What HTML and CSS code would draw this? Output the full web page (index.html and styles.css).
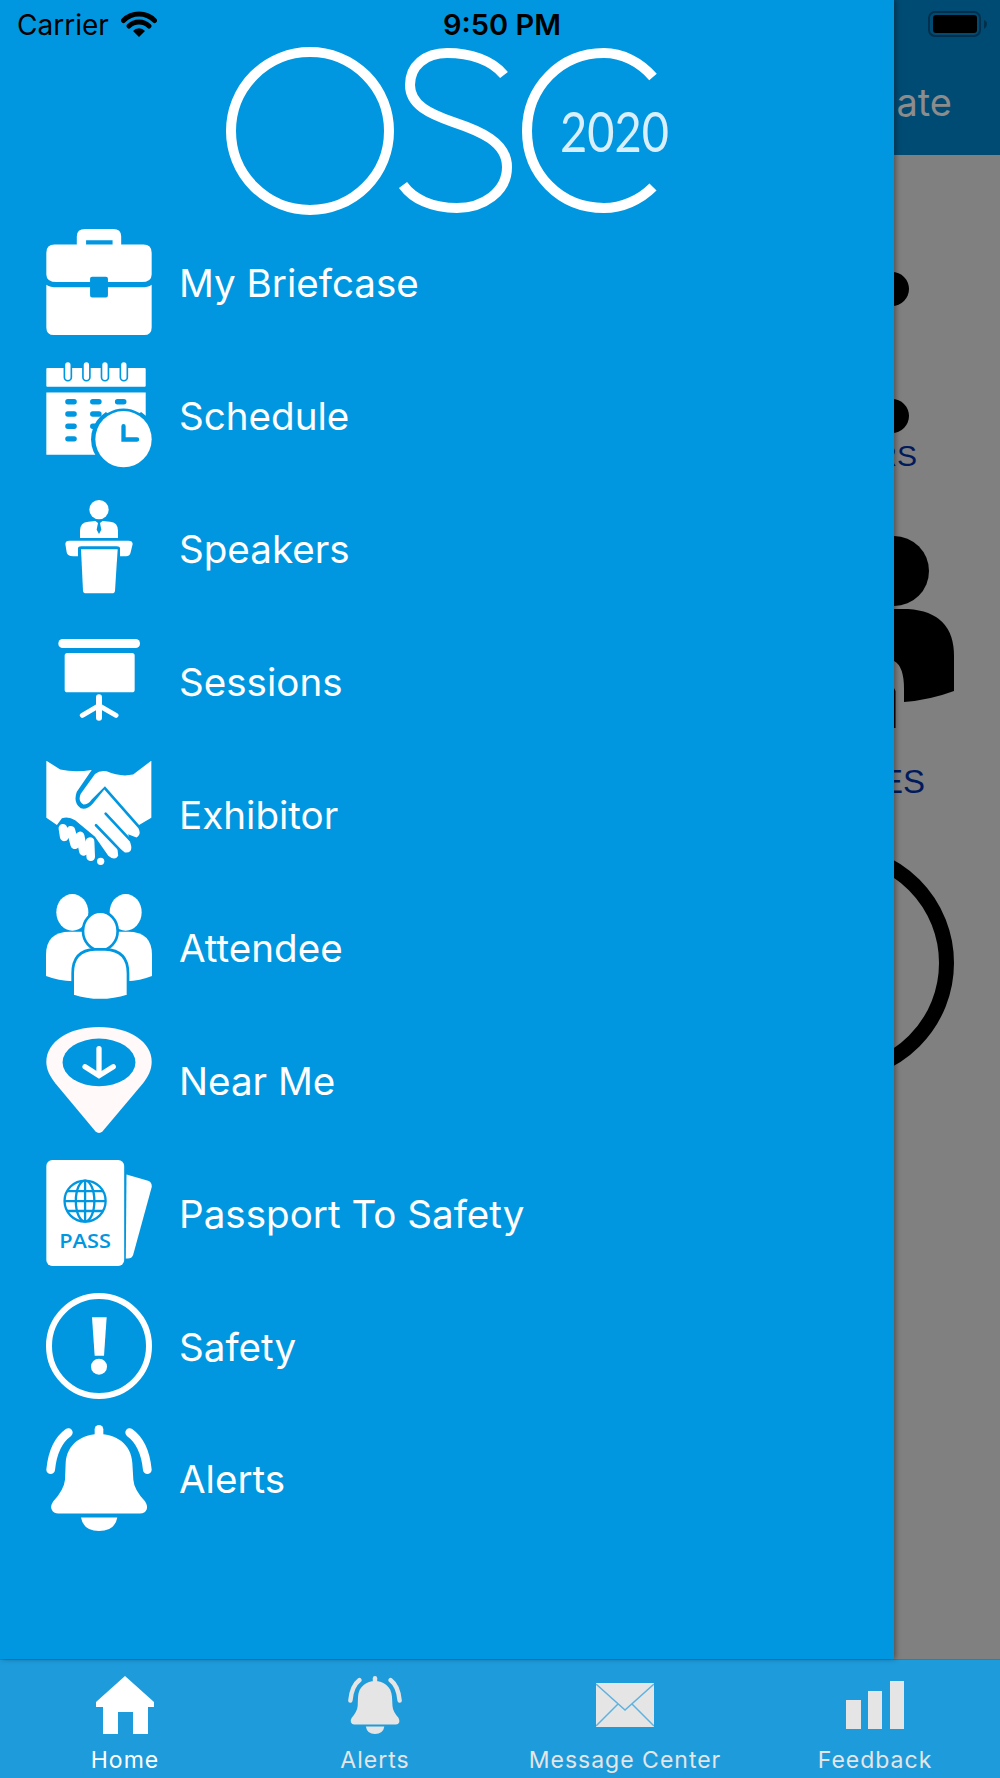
FILE: index.html
```html
<!DOCTYPE html>
<html>
	<head>
		<meta charset="utf-8">
		<title>OSC 2020</title>
		<link rel="stylesheet" href="styles.css">
	</head>
	<body>
		<svg class="defs" width="0" height="0">
			<symbol id="bell" viewBox="78 435 318 320" preserveAspectRatio="none">
				<path d="M237 462C190 462 140 490 137 550L135 600Q132 630 100 665Q90 680 95 690Q100 702 115 702H360Q375 702 380 690Q384 680 375 665Q342 630 340 600L337 550C334 490 285 462 237 462Z"/>
				<rect x="224" y="435" width="26" height="40" rx="13"/>
				<path d="M183 714H292Q285 755 237 755Q190 755 183 714Z"/>
				<path class="line" stroke-width="26" d="M145 458Q100 490 92 570M329 458Q374 490 382 570"/>
			</symbol>
		</svg>
		<div class="screen">
			<div class="status">
				<div class="carrier">Carrier
					<svg class="wifi" viewBox="0 0 36 26">
						<path class="line" stroke-width="5" d="M2.500 9.500A22 22 0 0 1 33.500 9.500M8 15A14.500 14.500 0 0 1 28 15"/>
						<path d="M12 20A8 8 0 0 1 24 20L18 26Z"/>
					</svg>
				</div>
				<div class="time">9:50 PM</div>
				<svg class="battery" viewBox="0 0 59 26">
					<rect class="battery_edge" x="1" y="1" width="51" height="24" rx="6"/>
					<rect x="5" y="4" width="44" height="18" rx="3"/>
					<path class="battery_tip" d="M56 9Q59 10 59 13Q59 16 56 18Z"/>
				</svg>
			</div>
			<div class="stage">
				<div class="backdrop">
					<div class="topbar">Update</div>
					<div class="page">
						<div class="dot dot_first"></div>
						<div class="dot dot_second"></div>
						<div class="page_label label_small">SPEAKERS</div>
						<svg class="person" viewBox="0 0 196 192">
							<circle cx="136" cy="35" r="35"/>
							<path d="M100 73H150Q196 76 196 120V155Q172 164 146 166V153Q146 130 136 125H100Z"/>
							<path d="M100 135Q130 135 137.500 155V192H100Z"/>
						</svg>
						<div class="page_label label_large">ATTENDEES</div>
						<svg class="ring" viewBox="0 0 236 236"><circle cx="118" cy="118" r="110.500"/></svg>
					</div>
				</div>
				<div class="drawer">
					<svg class="logo" viewBox="220 40 480 176" role="img" aria-label="OSC 2020">
						<circle class="line" cx="310" cy="131" r="79" stroke-width="10"/>
						<path class="line flat" stroke-width="10" d="M504 75C492 60 470 53 447 53C425 53 410 66 410 85C410 105 430 114 453 122C480 131 507 142 507 167C507 192 483 208 457 208C432 208 413 199 403 185"/>
						<path class="line flat" stroke-width="10" d="M653 77C640 62 622 53 604 53C560 53 527 88 527 131C527 174 560 208 604 208C622 208 640 200 653 187"/>
						<text class="logo_year" x="560" y="152" textLength="109" lengthAdjust="spacingAndGlyphs">2020</text>
					</svg>
					<div class="menu">
						<div class="menu_row">
							<svg class="menu_icon" viewBox="78 28 318 320">
								<path d="M170 80V50Q170 28 195 28H280Q304 28 304 50V80H278V62H198V80Z"/>
								<path d="M78 100Q78 75 103 75H371Q396 75 396 100V165Q396 188 365 188H264V178Q264 172 258 172H216Q210 172 210 178V188H110Q78 188 78 165Z"/>
								<path d="M78 196Q90 204 110 204H210V228Q210 235 216 235H258Q264 235 264 228V204H365Q385 204 396 196V325Q396 348 373 348H101Q78 348 78 325Z"/>
							</svg>
							<span>My Briefcase</span>
						</div>
						<div class="menu_row">
							<svg class="menu_icon" viewBox="78 428 318 320">
								<rect x="78" y="446" width="300" height="57" rx="3"/>
								<rect x="78" y="520" width="300" height="188"/>
								<path class="line cut_line" stroke-width="26" d="M143 438V474M199 438V474M255 438V474M312 438V474"/>
								<path class="line" stroke-width="16" d="M143 437V474M199 437V474M255 437V474M312 437V474"/>
								<path class="line cut_line" stroke-width="16" d="M143 548H162M218 548H237M293 548H312M143 585H162M218 585H237M143 622H162M218 622H237M143 660H162"/>
								<circle class="cut" cx="311" cy="661" r="98"/>
								<path class="line" stroke-width="9" d="M262 577A96 96 0 0 1 360 577"/>
								<circle cx="311" cy="661" r="85"/>
								<path class="line cut_line" stroke-width="13" d="M311 622V662H352"/>
							</svg>
							<span>Schedule</span>
						</div>
						<div class="menu_row">
							<svg class="menu_icon" viewBox="78 18 318 318">
								<circle cx="237" cy="62" r="29"/>
								<path d="M180 147V125Q180 100 205 98L226 96L237 104L248 96L270 98Q294 100 294 125V147Z"/>
								<path class="cut" d="M234 102H240L244 122L237 135L230 122Z"/>
								<path d="M148 155H325Q338 155 338 165L332 190Q330 202 318 202H300V178Q300 172 290 172H184Q174 172 174 178V202H160Q142 202 140 190L136 165Q136 155 148 155Z"/>
								<path d="M183 181H293L285 305Q284 313 276 313H198Q190 313 189 305Z"/>
							</svg>
							<span>Speakers</span>
						</div>
						<div class="menu_row">
							<svg class="menu_icon" viewBox="78 417 318 318">
								<rect x="115" y="450" width="245" height="27" rx="13"/>
								<rect x="134" y="492" width="210" height="118" rx="8"/>
								<path class="line" stroke-width="18" d="M237 625V686"/>
								<path class="line" stroke-width="15" d="M187 679L237 650L288 679"/>
							</svg>
							<span>Sessions</span>
						</div>
						<div class="menu_row">
							<svg class="menu_icon" viewBox="18 19 318 320">
								<path d="M18 18L60 45Q105 55 155 46L110 112Q98 145 122 162Q140 168 158 148L193 105L296 222Q306 240 290 250L265 240L274 275Q278 298 255 295L232 278L235 305Q225 322 205 305L165 248L105 198Q85 185 65 192L50 212L18 190Z"/>
								<path d="M335 18L280 60Q240 68 200 50Q180 46 165 58L122 118Q112 140 130 150Q145 150 155 135L195 95L298 212L335 190Z"/>
								<path class="line cut_line" stroke-width="8" d="M197 178L285 272M168 213L252 300"/>
								<path class="line" stroke-width="26" d="M68 222L72 248M92 228L104 272M120 245L130 292M150 262L152 308"/>
								<circle cx="182" cy="322" r="11"/>
							</svg>
							<span>Exhibitor</span>
						</div>
						<div class="menu_row">
							<svg class="menu_icon" viewBox="78 432 318 318">
								<ellipse cx="157" cy="487" rx="48" ry="55"/>
								<ellipse cx="317" cy="487" rx="48" ry="55"/>
								<path d="M78 678V615Q78 545 150 545H324Q396 545 396 615V678Q360 692 320 694H160Q115 692 78 678Z"/>
								<ellipse class="outlined" cx="241" cy="543" rx="52" ry="58"/>
								<path class="outlined" d="M158 737V670Q158 600 225 598H255Q324 600 324 670V737Q240 764 158 737Z"/>
							</svg>
							<span>Attendee</span>
						</div>
						<div class="menu_row">
							<svg class="menu_icon" viewBox="78 20 318 320">
								<path class="pin" d="M237 20C330 20 396 65 396 125C396 150 385 170 370 190L248 335Q237 345 226 335L105 190C90 170 78 150 78 125C78 65 145 20 237 20Z"/>
								<ellipse class="cut" cx="237" cy="127" rx="110" ry="72"/>
								<path class="line" stroke-width="16" d="M237 85V165M195 140L237 167L280 140"/>
							</svg>
							<span>Near Me</span>
						</div>
						<div class="menu_row">
							<svg class="menu_icon" viewBox="78 418 318 320">
								<rect x="78" y="418" width="235" height="320" rx="18"/>
								<path d="M320 462L385 481Q398 486 396 500L340 705Q335 718 318 715Z"/>
								<g class="globe">
									<circle cx="195" cy="542" r="62"/>
									<ellipse cx="195" cy="542" rx="28" ry="62"/>
									<path d="M195 480V604M140 512H250M133 542H257M140 572H250"/>
								</g>
								<text class="pass" x="117" y="685" textLength="156" lengthAdjust="spacingAndGlyphs">PASS</text>
							</svg>
							<span>Passport To Safety</span>
						</div>
						<div class="menu_row">
							<svg class="menu_icon" viewBox="78 37 318 318">
								<circle class="line" cx="237" cy="196" r="150" stroke-width="18"/>
								<path d="M216 110H260L252 225H224Z"/>
								<circle cx="237" cy="258" r="24"/>
							</svg>
							<span>Safety</span>
						</div>
						<div class="menu_row">
							<svg class="menu_icon"><use href="#bell"/></svg>
							<span>Alerts</span>
						</div>
					</div>
				</div>
			</div>
			<div class="tabbar">
				<div class="tab tab_active">
					<div class="tab_icon">
						<svg class="tab_home" viewBox="0 0 58 58"><path d="M29 0L58 26V31H52V58H37V36H22V58H7V31H0V26Z"/></svg>
					</div>
					<div>Home</div>
				</div>
				<div class="tab">
					<div class="tab_icon">
						<svg class="tab_bell"><use href="#bell"/></svg>
					</div>
					<div>Alerts</div>
				</div>
				<div class="tab">
					<div class="tab_icon">
						<svg class="tab_mail" viewBox="0 0 58 44">
							<rect width="58" height="44"/>
							<path class="mail_fold" d="M0 1L29 27L58 1M0 43L22 21M58 43L36 21"/>
						</svg>
					</div>
					<div>Message Center</div>
				</div>
				<div class="tab">
					<div class="tab_icon">
						<svg class="tab_bars" viewBox="0 0 58 48">
							<rect y="19" width="15" height="29"/>
							<rect x="22" y="10" width="14" height="38"/>
							<rect x="44" width="14" height="48"/>
						</svg>
					</div>
					<div>Feedback</div>
				</div>
			</div>
		</div>
	</body>
</html>
```

FILE: styles.css
```css
body {
    margin: 0;
    font-family: Inter, "Liberation Sans", sans-serif;
}
svg {
    fill: currentColor;
}
.defs {
    position: absolute;
}
.line {
    fill: none;
    stroke: currentColor;
    stroke-linecap: round;
}
.flat {
    stroke-linecap: butt;
}
.cut {
    fill: #0097e0;
}
.cut_line {
    stroke: #0097e0;
}
.screen {
    position: relative;
    width: 1000px;
    height: 1778px;
    display: flex;
    flex-direction: column;
    overflow: hidden;
}

/* status bar lies over the drawer and the page */
.status {
    position: absolute;
    top: 0;
    left: 0;
    right: 0;
    z-index: 2;
    height: 48px;
    box-sizing: border-box;
    padding: 12px 13px 0 17px;
    display: grid;
    grid-template-columns: 1fr auto 1fr;
    color: #000;
    font-size: 28px;
    line-height: 26px;
}
.carrier {
    display: flex;
    gap: 12px;
    align-items: flex-start;
}
.wifi {
    width: 36px;
    height: 26px;
    margin-top: -1px;
}
.time {
    font-size: 29px;
    font-weight: 600;
}
.battery {
    justify-self: end;
    width: 59px;
    height: 26px;
    margin-top: -1px;
}
.battery_edge {
    fill: none;
    stroke: #00304b;
    stroke-width: 2;
}
.battery_tip {
    fill: #00304b;
}

.stage {
    flex: 1;
    position: relative;
}
.backdrop {
    height: 100%;
    display: flex;
    flex-direction: column;
    background: #808080;
}
.topbar {
    height: 155px;
    box-sizing: border-box;
    padding: 81px 48px 0 0;
    background: #004b73;
    color: #8c8c8c;
    font-size: 38px;
    line-height: 42px;
    text-align: right;
}
.page {
    display: flex;
    flex-direction: column;
    align-items: flex-end;
    padding: 117px 46px 0 0;
}
.dot {
    width: 34px;
    height: 34px;
    margin-right: 45px;
    border-radius: 50%;
    background: #000;
}
.dot_second {
    margin-top: 93px;
}
.page_label {
    color: #001a5c;
    font-family: "Liberation Sans", sans-serif;
    font-size: 30px;
    line-height: 30px;
}
.label_small {
    margin: 8px 37px 0 0;
}
.person {
    width: 196px;
    height: 192px;
    margin-top: 65px;
}
.label_large {
    margin: 37px 29px 0 0;
    font-size: 33px;
    line-height: 33px;
}
.ring {
    width: 236px;
    height: 236px;
    margin-top: 47px;
}
.ring circle {
    fill: none;
    stroke: #000;
    stroke-width: 15;
}

.drawer {
    position: absolute;
    top: 0;
    bottom: 0;
    left: 0;
    width: 894px;
    display: flex;
    flex-direction: column;
    background: #0097e0;
    color: #fff;
    box-shadow: 2px 0 5px rgba(0,0,0,.35);
}
.logo {
    flex: none;
    width: 480px;
    height: 176px;
    margin: 40px 0 0 220px;
}
.logo_year {
    font-family: Lato, sans-serif;
    font-weight: 400;
    font-size: 57px;
    fill: #d9effb;
}
.menu {
    display: flex;
    flex-direction: column;
}
.menu_row {
    height: 132.900px;
    padding-left: 46px;
    display: flex;
    align-items: center;
    gap: 27px;
    font-size: 38.600px;
}
.menu_row span {
    padding-top: 2px;
}
.menu_icon {
    width: 106px;
    height: 106px;
}
.outlined {
    stroke: #0097e0;
    stroke-width: 8;
}
.pin {
    fill: #fff9f9;
}
.globe * {
    fill: none;
    stroke: #0097e0;
    stroke-width: 7;
}
.pass {
    fill: #0097e0;
    font-family: "Open Sans", sans-serif;
    font-weight: 600;
    font-size: 62px;
}

.tabbar {
    height: 119px;
    box-sizing: border-box;
    display: grid;
    grid-template-columns: repeat(4, 1fr);
    border-top: 1px solid #1786bf;
    background: #1e9bdb;
    color: #e5e5e5;
    font-size: 23px;
    letter-spacing: 1px;
    line-height: 20px;
    text-align: center;
}
.tab_active {
    color: #fff;
}
.tab_icon {
    height: 90px;
    display: flex;
    justify-content: center;
    align-items: center;
}
.tab_home {
    width: 58px;
    height: 58px;
}
.tab_bell {
    width: 54px;
    height: 58px;
}
.tab_mail {
    width: 58px;
    height: 44px;
}
.tab_bars {
    width: 58px;
    height: 48px;
}
.mail_fold {
    fill: none;
    stroke: #5fb2de;
    stroke-width: 1.500;
}
```
